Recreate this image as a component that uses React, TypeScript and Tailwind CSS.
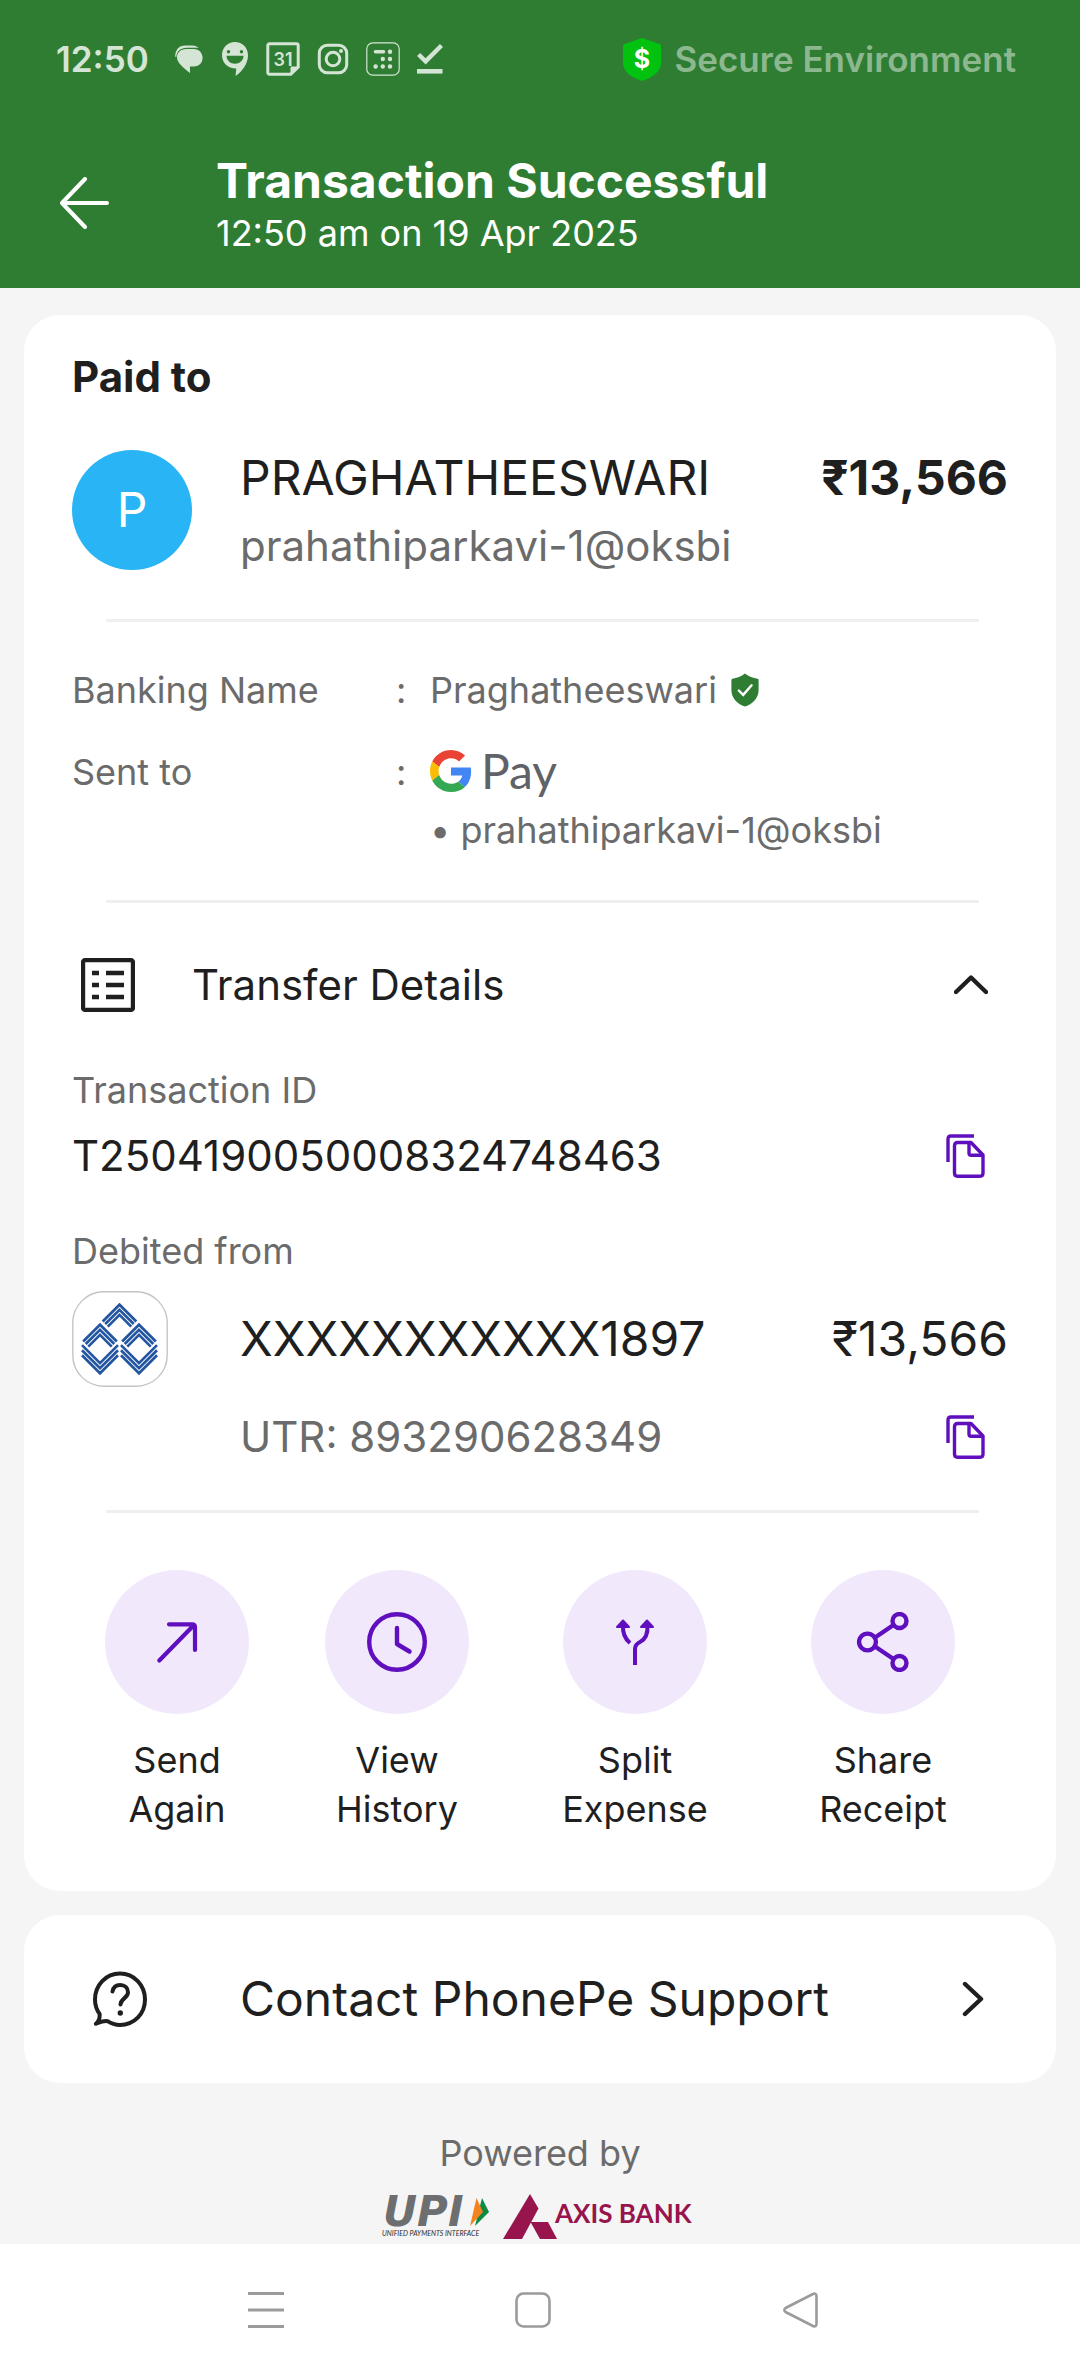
import React from "react";

const INK = "#1f1f1f";
const PURPLE = "#5f0fbe";
const MINT = "#d5e5d5";

function Divider({ className }: { className: string }) {
  return <hr className={`mr-[29px] ml-[34px] h-[3px] border-0 bg-[#efefef] ${className}`} />;
}

/* ---------- status bar icons ---------- */

function ChatIcon() {
  return (
    <svg width="30" height="30" viewBox="0 0 30 30" fill={MINT} aria-hidden="true">
      <path d="M1.2 12.8C1 5.8 5 1.4 11 1.4h7c3 0 5.500 1.200 6.600 2.400H13C6.500 3.800 2.600 7.500 2.300 13z" />
      <path d="M12 5h8c5 0 8.600 4 8.600 8.800 0 5-3.600 8.600-8.600 8.600h-4V29C9 23.500 3 18.500 3 13.500 3 8.500 7 5 12 5z" />
    </svg>
  );
}

function SmileyPinIcon() {
  return (
    <svg width="28" height="34" viewBox="0 0 28 34" aria-hidden="true">
      <path fill={MINT} d="M14 0c7.400 0 13 5.800 13 13.200C27 22 21 29.500 14.500 34l.8-7.600C7 26.600 1 21 1 13.200 1 5.800 6.600 0 14 0z" />
      <circle cx="7.500" cy="9.800" r="1.700" fill="#2f7d32" />
      <circle cx="20.500" cy="9.800" r="1.700" fill="#2f7d32" />
      <path fill="#2f7d32" d="M5.500 13.800h17c0 4.700-3.800 8-8.500 8s-8.500-3.300-8.500-8z" />
    </svg>
  );
}

function CalendarIcon() {
  return (
    <svg width="34" height="34" viewBox="0 0 34 34" aria-hidden="true">
      <path d="M3.500 1.800h27c1 0 1.700.7 1.700 1.700V25l-7.400 7.200H3.500c-1 0-1.700-.7-1.700-1.700v-27c0-1 .7-1.700 1.700-1.700z" fill="none" stroke={MINT} strokeWidth="3" />
      <path d="M32 24.500h-5.800c-1 0-1.700.7-1.700 1.700V32z" fill={MINT} />
      <text x="17" y="23.500" textAnchor="middle" fontFamily="Inter, sans-serif" fontWeight="600" fontSize="18" fill={MINT}>31</text>
    </svg>
  );
}

function CameraIcon() {
  return (
    <svg width="32" height="32" viewBox="0 0 32 32" fill="none" stroke={MINT} aria-hidden="true">
      <rect x="2.300" y="2.300" width="27.400" height="27.400" rx="8" strokeWidth="3" />
      <circle cx="16" cy="16" r="6.800" strokeWidth="3" />
      <circle cx="24" cy="8" r="2" fill={MINT} stroke="none" />
    </svg>
  );
}

function CalculatorIcon() {
  return (
    <svg width="34" height="34" viewBox="0 0 34 34" fill={MINT} aria-hidden="true">
      <rect x="0.800" y="0.800" width="32.400" height="32.400" rx="6" fill="none" stroke={MINT} strokeWidth="1.200" />
      <path d="M9.500 9.800h8" stroke={MINT} strokeWidth="3.600" strokeLinecap="round" />
      <circle cx="24" cy="9.800" r="2.200" />
      <circle cx="16.800" cy="17" r="2.200" />
      <circle cx="24" cy="17" r="2.200" />
      <circle cx="9.600" cy="24.500" r="2.200" />
      <circle cx="16.800" cy="24.500" r="2.200" />
      <circle cx="24" cy="24.500" r="2.200" />
    </svg>
  );
}

function DoneIcon() {
  return (
    <svg width="26" height="32" viewBox="0 0 26 32" fill="none" stroke={MINT} aria-hidden="true">
      <path d="M1.600 11.500l7 6.800L24.500 2.500" strokeWidth="4.400" />
      <path d="M0 28.300h25.500" strokeWidth="4.600" />
    </svg>
  );
}

function DollarShield() {
  return (
    <svg width="38" height="43" viewBox="0 0 38 43" aria-hidden="true">
      <path fill="#00c20f" d="M19 0l18 6.200c.6.200 1 .7 1 1.400V25c0 8.500-8.500 14.500-19 18C8.500 39.500 0 33.500 0 25V7.600c0-.7.4-1.200 1-1.400z" />
      <text x="19" y="30" textAnchor="middle" fontFamily="Inter, sans-serif" fontWeight="700" fontSize="25" fill="#ffffff">$</text>
    </svg>
  );
}

/* ---------- content icons ---------- */

function VerifiedShield() {
  return (
    <svg width="28" height="34" viewBox="0 0 28 34" aria-hidden="true">
      <path fill="#2f7d32" d="M14 .5c3.800 3 8 4.600 12.600 5.200.6.100 1 .6 1 1.200V17c0 8-5.600 14-13.600 16.500C6 31 .4 25 .4 17V6.900c0-.6.4-1.100 1-1.200C6 5.100 10.200 3.500 14 .5z" />
      <path d="M7.800 17.500l4.400 4.400 8.400-9.600" fill="none" stroke="#ffffff" strokeWidth="2.400" strokeLinecap="round" />
    </svg>
  );
}

function GooglePayLogo() {
  return (
    <svg width="132" height="62" viewBox="0 0 132 62" role="img" aria-label="Google Pay">
      <g transform="translate(0 9) scale(0.875)">
        <path fill="#EA4335" d="M24 9.500c3.540 0 6.710 1.220 9.210 3.600l6.850-6.850C35.900 2.380 30.470 0 24 0 14.620 0 6.510 5.380 2.560 13.220l7.980 6.190C12.430 13.720 17.740 9.500 24 9.500z" />
        <path fill="#4285F4" d="M46.980 24.550c0-1.570-.15-3.090-.38-4.550H24v9.020h12.940c-.58 2.960-2.260 5.480-4.780 7.180l7.730 6c4.510-4.180 7.090-10.360 7.090-17.650z" />
        <path fill="#FBBC05" d="M10.530 28.590c-.48-1.450-.76-2.990-.76-4.590s.27-3.140.76-4.590l-7.980-6.190C.92 16.460 0 20.120 0 24c0 3.880.92 7.540 2.560 10.780l7.970-6.190z" />
        <path fill="#34A853" d="M24 48c6.480 0 11.930-2.130 15.890-5.810l-7.730-6c-2.150 1.450-4.920 2.300-8.160 2.300-6.260 0-11.570-4.220-13.470-9.910l-7.980 6.190C6.510 42.620 14.620 48 24 48z" />
      </g>
      <text x="51" y="48" fontFamily="Lato, sans-serif" fontSize="48" fill="#5f6368">Pay</text>
    </svg>
  );
}

function ListIcon() {
  return (
    <svg width="54" height="54" viewBox="0 0 54 54" fill="none" stroke={INK} aria-hidden="true">
      <rect x="2" y="2" width="50" height="50" rx="2.500" strokeWidth="4.400" />
      <path d="M11 15h7M11 27h7M11 39h7M25 15h18M25 27h18M25 39h18" strokeWidth="4.400" />
    </svg>
  );
}

function ChevronUp() {
  return (
    <svg width="34" height="20" viewBox="0 0 34 20" fill="none" aria-hidden="true">
      <path d="M2 17L17 2.500l15 14.500" stroke={INK} strokeWidth="4.400" strokeLinecap="round" strokeLinejoin="round" />
    </svg>
  );
}

function ChevronRight() {
  return (
    <svg width="22" height="36" viewBox="0 0 22 36" fill="none" aria-hidden="true">
      <path d="M3 3l16 15L3 33" stroke={INK} strokeWidth="4.400" strokeLinecap="round" strokeLinejoin="round" />
    </svg>
  );
}

function CopyIcon() {
  return (
    <svg width="39" height="44" viewBox="0 0 39 44" fill="none" stroke={PURPLE} strokeWidth="3.400" strokeLinejoin="round" aria-hidden="true">
      <path d="M2 28V5c0-2 1-3 3-3h23" />
      <path d="M11.500 8.500H25L37 21v18c0 2-1 3.200-3 3.200H11.500c-2 0-3-1.200-3-3.200V11.700c0-2 1-3.200 3-3.200z" />
      <path d="M23 8.500V19c0 1.500.7 2.200 2.200 2.200H37" />
    </svg>
  );
}

function SendIcon() {
  return (
    <svg width="60" height="60" viewBox="0 0 60 60" fill="none" stroke={PURPLE} strokeWidth="4.200" strokeLinecap="round" strokeLinejoin="round" aria-hidden="true">
      <path d="M22 12.300h23c2 0 3 1 3 3V38M12.300 48.500L46 14" />
    </svg>
  );
}

function ClockIcon() {
  return (
    <svg width="60" height="60" viewBox="0 0 60 60" fill="none" stroke={PURPLE} strokeWidth="4.400" strokeLinecap="round" strokeLinejoin="round" aria-hidden="true">
      <circle cx="30" cy="30" r="27.800" />
      <path d="M30 16v16l12.500 7.500" />
    </svg>
  );
}

function SplitIcon() {
  return (
    <svg width="60" height="60" viewBox="0 0 60 60" fill="none" stroke={PURPLE} strokeWidth="4" aria-hidden="true">
      <path d="M30 53V37c0-4 2-5.500 5-7 6-3 8-8.500 7.500-17" />
      <path d="M18 13c-.5 8 1.500 13.500 7 18" />
      <g fill={PURPLE} strokeWidth="2" strokeLinejoin="round">
        <path d="M18 8.500l6 6.500H12z" />
        <path d="M42 8.500l6 6.500H36z" />
      </g>
    </svg>
  );
}

function ShareIcon() {
  return (
    <svg width="60" height="60" viewBox="0 0 60 60" fill="none" stroke={PURPLE} strokeWidth="4.400" aria-hidden="true">
      <circle cx="14.500" cy="30" r="8.400" />
      <circle cx="46.500" cy="9" r="7" />
      <circle cx="46.500" cy="51" r="7" />
      <path d="M22 25.500L40.500 13M22 34.500L40.500 47" />
    </svg>
  );
}

function HelpBubbleIcon() {
  return (
    <svg width="54" height="56" viewBox="0 0 54 56" fill="none" stroke={INK} strokeLinecap="round" strokeLinejoin="round" aria-hidden="true">
      <path d="M2.800 52.800c3.400-2.400 4-5.200 3.900-9.600C3.600 38.800 2 34 2 28.500 2 14 13 2.500 27 2.500s25 11.500 25 26S41 54 27 54c-4.800 0-8.600-1.200-12.400-3.800-3.800-.8-7.600 1-11.800 2.600z" strokeWidth="4" />
      <path d="M19.500 20.500c.8-4.400 3.900-6.500 7.700-6.500 4.500 0 7.800 3 7.800 7.200 0 6-7.500 6.300-7.500 12.300" strokeWidth="4" />
      <circle cx="27.300" cy="42" r="2.700" fill={INK} stroke="none" />
    </svg>
  );
}

function IndianBankLogo() {
  const roof = [1.2, 4.8, 8.4];
  const base = [64.3, 59.2, 54.1];
  return (
    <svg width="96" height="96" viewBox="0 0 96 96" fill="none" role="img" aria-label="Indian Bank">
      <rect x="0.800" y="0.800" width="94.400" height="94.400" rx="31" stroke="#c4c4c4" strokeWidth="1.400" />
      <g stroke="#2455a0" strokeWidth="2.700">
        {[[47.5, 12], [28, 32], [67, 32]].map(([x, y]) => (
          <g key={x} transform={`translate(${x} ${y}) rotate(45)`}>
            {roof.map((o) => (
              <path key={o} d={`M${o} 25V${o}H25`} />
            ))}
          </g>
        ))}
        {[28, 67].map((x) => (
          <g key={x}>
            {base.map((y) => (
              <path key={y} d={`M${x - 18} ${y}l18 18l18 -18`} />
            ))}
          </g>
        ))}
      </g>
    </svg>
  );
}

function UpiLogo() {
  return (
    <svg width="112" height="45" viewBox="0 0 112 45" className="overflow-visible" role="img" aria-label="UPI Unified Payments Interface">
      <path fill="#0e8a43" d="M101 4l7 14-14 14z" />
      <path fill="#f58220" d="M95.500 4l6.500 14-13 14z" />
      <text x="2" y="32" fontFamily="'DejaVu Sans', sans-serif" fontWeight="700" fontStyle="italic" fontSize="42" fill="#6d6e70">UPI</text>
      <text x="1" y="42" fontFamily="Lato, sans-serif" fontWeight="400" fontStyle="italic" fontSize="7" fill="#2c2c2c">UNIFIED PAYMENTS INTERFACE</text>
    </svg>
  );
}

function AxisBankLogo() {
  return (
    <svg width="196" height="45" viewBox="0 0 196 45" role="img" aria-label="Axis Bank" fill="#97144d">
      <path d="M27 0l8.500 14.500L19 45H0z" />
      <path d="M27.500 28H45l9 17H37z" />
      <text x="52" y="29" fontFamily="Lato, sans-serif" fontWeight="700" fontSize="26">AXIS BANK</text>
    </svg>
  );
}

/* ---------- rows ---------- */

function DetailRow({ label, children }: { label: string; children: React.ReactNode }) {
  return (
    <div className="flex">
      <dt className="w-[324px]">{label}</dt>
      <span className="w-[34px]">:</span>
      <dd className="flex-1">{children}</dd>
    </div>
  );
}

const actions = [
  { first: "Send", second: "Again", icon: <SendIcon /> },
  { first: "View", second: "History", icon: <ClockIcon /> },
  { first: "Split", second: "Expense", icon: <SplitIcon /> },
  { first: "Share", second: "Receipt", icon: <ShareIcon /> },
];

export default function App() {
  return (
    <div className="flex min-h-screen flex-col bg-[#f5f5f5] font-['Inter',sans-serif] text-[#1f1f1f]">
      <header className="bg-[#2f7d32] text-white">
        <div className="flex h-[118px] items-center justify-between pr-16 pl-14 text-[35px] font-semibold">
          <div className="flex items-center gap-[17px]">
            <span className="mr-2 text-[#d5e5d5]">12:50</span>
            <ChatIcon />
            <SmileyPinIcon />
            <CalendarIcon />
            <CameraIcon />
            <CalculatorIcon />
            <DoneIcon />
          </div>
          <div className="flex items-center gap-3.5">
            <DollarShield />
            <span className="text-[#8db88f]">Secure Environment</span>
          </div>
        </div>
        <div className="flex items-center py-[33px] pl-[60px]">
          <button type="button" aria-label="Back" className="w-[156px]">
            <svg width="50" height="52" viewBox="0 0 50 52" fill="none" stroke="#ffffff" strokeWidth="4" strokeLinecap="round" strokeLinejoin="round" aria-hidden="true">
              <path d="M25 2L2 26l23 24M2 26h45" />
            </svg>
          </button>
          <div>
            <h1 className="text-[48px] leading-[60px] font-bold">Transaction Successful</h1>
            <p className="text-[36px] leading-[44px]">12:50 am on 19 Apr 2025</p>
          </div>
        </div>
      </header>

      <main className="flex-1 px-6 pt-[27px]">
        <section className="rounded-[36px] bg-white px-12 pt-[38px] pb-[57px]">
          <h2 className="text-[42px] leading-[48px] font-bold">Paid to</h2>
          <div className="mt-[47px] flex items-center">
            <div className="flex size-[120px] items-center justify-center rounded-full bg-[#29b4f6] text-[48px] text-white">P</div>
            <div className="ml-12 flex flex-1 flex-col gap-3">
              <div className="flex justify-between text-[48px] leading-[60px]">
                <span>PRAGHATHEESWARI</span>
                <span className="font-bold">₹13,566</span>
              </div>
              <span className="text-[42px] leading-[52px] text-[#6b6b6b]">prahathiparkavi-1@oksbi</span>
            </div>
          </div>
          <Divider className="mt-[47px]" />

          <dl className="mt-11 flex flex-col gap-[34px] text-[36px] leading-[48px] text-[#6b6b6b]">
            <DetailRow label="Banking Name">
              <span className="flex items-center gap-3.5">
                Praghatheeswari <VerifiedShield />
              </span>
            </DetailRow>
            <DetailRow label="Sent to">
              <span className="flex h-12 items-center">
                <GooglePayLogo />
              </span>
              <span className="mt-2.5 block">• prahathiparkavi-1@oksbi</span>
            </DetailRow>
          </dl>
          <Divider className="mt-[46px]" />

          <button type="button" aria-expanded="true" className="mt-[54px] flex h-14 w-full items-center pr-5 pl-[9px]">
            <ListIcon />
            <span className="ml-[57px] flex-1 text-left text-[42px] leading-[52px]">Transfer Details</span>
            <ChevronUp />
          </button>

          <h3 className="mt-[53px] text-[36px] leading-[48px] text-[#6b6b6b]">Transaction ID</h3>
          <div className="mt-4 flex items-center justify-between pr-[23px] text-[42px] leading-[52px]">
            <span>T2504190050008324748463</span>
            <button type="button" aria-label="Copy transaction ID">
              <CopyIcon />
            </button>
          </div>

          <h3 className="mt-[45px] text-[36px] leading-[48px] text-[#6b6b6b]">Debited from</h3>
          <div className="mt-4 flex items-center text-[48px] leading-[60px]">
            <IndianBankLogo />
            <span className="ml-[72px] flex-1">XXXXXXXXXXX1897</span>
            <span>₹13,566</span>
          </div>
          <div className="mt-6 flex items-center justify-between pr-[23px] pl-[168px] text-[42px] leading-[52px] text-[#6b6b6b]">
            <span>UTR: 893290628349</span>
            <button type="button" aria-label="Copy UTR">
              <CopyIcon />
            </button>
          </div>
          <Divider className="mt-[47px]" />

          <div className="mt-[57px] grid grid-cols-[210fr_230fr_246fr_250fr]">
            {actions.map((a) => (
              <button key={a.first} type="button" className="flex flex-col items-center text-[36px] leading-[49px]">
                <span className="mb-[22px] flex size-36 items-center justify-center rounded-full bg-[#f2e8fc]">{a.icon}</span>
                <span>{a.first}</span>
                <span>{a.second}</span>
              </button>
            ))}
          </div>
        </section>

        <button type="button" className="mt-6 flex h-[168px] w-full items-center rounded-[36px] bg-white pr-[72px] pl-[69px]">
          <HelpBubbleIcon />
          <span className="ml-[93px] flex-1 text-left text-[48px] leading-[60px]">Contact PhonePe Support</span>
          <ChevronRight />
        </button>

        <footer className="mt-[46px] flex flex-col items-center pb-[5px]">
          <p className="text-[36px] leading-[48px] text-[#6b6b6b]">Powered by</p>
          <div className="mt-[17px] flex gap-2.5">
            <UpiLogo />
            <AxisBankLogo />
          </div>
        </footer>
      </main>

      <nav className="flex h-[132px] items-center justify-center gap-[231px] bg-white pr-3.5">
        <button type="button" aria-label="Recent apps">
          <svg width="36" height="38" viewBox="0 0 36 38" stroke="#9b9b9b" strokeWidth="3" aria-hidden="true">
            <path d="M0 2.500h36M0 19h36M0 35.500h36" />
          </svg>
        </button>
        <button type="button" aria-label="Home">
          <svg width="36" height="38" viewBox="0 0 36 38" fill="none" stroke="#9b9b9b" strokeWidth="2.600" aria-hidden="true">
            <rect x="1.500" y="2.500" width="33" height="33" rx="7" />
          </svg>
        </button>
        <button type="button" aria-label="Back navigation">
          <svg width="36" height="38" viewBox="0 0 36 38" fill="none" stroke="#9b9b9b" strokeWidth="2.600" strokeLinejoin="round" aria-hidden="true">
            <path d="M31 3L3.500 17c-1.500 1-1.500 3 0 4L31 35c1.800 1 3.500 0 3.500-2V5c0-2-1.700-3-3.500-2z" />
          </svg>
        </button>
      </nav>
    </div>
  );
}
